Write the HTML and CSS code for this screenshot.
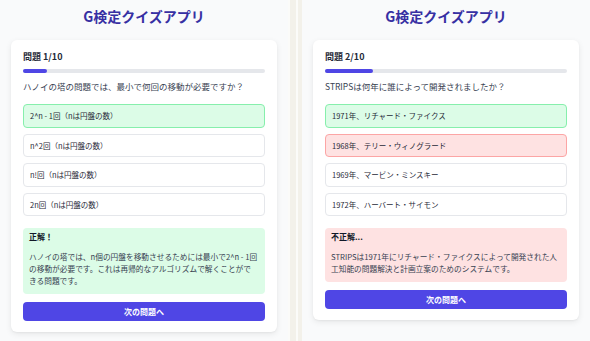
FILE: index.html
```html
<!DOCTYPE html>
<html lang="ja">

<head>
  <meta charset="UTF-8">
  <meta name="viewport" content="width=device-width, initial-scale=1.0">
  <title>G検定クイズアプリ</title>
  <link rel="stylesheet" href="styles.css">
</head>

<body>
  <div class="shots">
    <section class="app">
      <h1 class="app-title">G検定クイズアプリ</h1>
      <div class="card">
        <div class="q-head">問題 1/10</div>
        <div class="progress">
          <div class="progress-bar" style="width: 10%"></div>
        </div>
        <p class="q-text">ハノイの塔の問題では、最小で何回の移動が必要ですか？</p>
        <ul class="options">
          <li class="option option--correct">2^n - 1回（nは円盤の数）</li>
          <li class="option">n^2回（nは円盤の数）</li>
          <li class="option">n!回（nは円盤の数）</li>
          <li class="option">2n回（nは円盤の数）</li>
        </ul>
        <div class="feedback feedback--ok">
          <div class="feedback-title">正解！</div>
          <p class="feedback-text">ハノイの塔では、n個の円盤を移動させるためには最小で2^n - 1回の移動が必要です。これは再帰的なアルゴリズムで解くことがで<br>きる問題です。</p>
        </div>
        <button type="button" class="next-btn">次の問題へ</button>
      </div>
    </section>

    <div class="divider"></div>

    <section class="app">
      <h1 class="app-title">G検定クイズアプリ</h1>
      <div class="card">
        <div class="q-head">問題 2/10</div>
        <div class="progress">
          <div class="progress-bar" style="width: 20%"></div>
        </div>
        <p class="q-text">STRIPSは何年に誰によって開発されましたか？</p>
        <ul class="options">
          <li class="option option--correct">1971年、リチャード・ファイクス</li>
          <li class="option option--wrong">1968年、テリー・ウィノグラード</li>
          <li class="option">1969年、マービン・ミンスキー</li>
          <li class="option">1972年、ハーバート・サイモン</li>
        </ul>
        <div class="feedback feedback--ng">
          <div class="feedback-title">不正解...</div>
          <p class="feedback-text">STRIPSは1971年にリチャード・ファイクスによって開発された人工知能の問題解決と計画立案のためのシステムです。</p>
        </div>
        <button type="button" class="next-btn">次の問題へ</button>
      </div>
    </section>
  </div>
</body>

</html>
```

FILE: styles.css
```css
body {
  margin: 0;
  font-family: "Noto Sans CJK JP", sans-serif;
  color: #374151;
}
.shots {
  display: flex;
  height: 341px;
  overflow: hidden;
}
.app {
  flex: 1;
  background: #f9fafb;
  padding: 0 11px;
}
.divider {
  width: 14px;
  background: linear-gradient(to right, #fbfbf9 0 2px, #f3f1ea 2px 8px, #fbfbf9 8px 10px, #f3f1ea 10px);
}
.app-title {
  margin: 6px 0 14px;
  font-size: 14px;
  line-height: 20px;
  text-align: center;
  color: #3730a3;
}
.card {
  background: #fff;
  border-radius: 6px;
  padding: 11px 12px;
  box-shadow: 0 2px 6px rgba(0, 0, 0, 0.08), 0 1px 2px rgba(0, 0, 0, 0.04);
}
.q-head {
  font-size: 9px;
  line-height: 12px;
  font-weight: 700;
  color: #1f2937;
}
.progress {
  margin-top: 6px;
  height: 4px;
  border-radius: 2px;
  background: #e5e7eb;
}
.progress-bar {
  height: 100%;
  border-radius: 2px;
  background: #4f46e5;
}
.q-text {
  margin: 7px 0 12px;
  font-size: 8.5px;
  line-height: 12px;
}
.options {
  list-style: none;
  margin: 0;
  padding: 0;
  display: flex;
  flex-direction: column;
  gap: 6px;
}
.option {
  padding: 5px 6px;
  font-size: 7.5px;
  line-height: 11.5px;
  border: 1px solid #e5e7eb;
  border-radius: 4px;
  background: #fff;
  color: #1f2937;
}
.option--correct {
  background: #dcfce7;
  border-color: #86efac;
}
.option--wrong {
  background: #fee2e2;
  border-color: #fca5a5;
}
.feedback {
  margin-top: 12px;
  padding: 4px 5.3px 7px 6px;
  border-radius: 4px;
}
.feedback--ok {
  background: #dcfce7;
}
.feedback--ng {
  background: #fee2e2;
}
.feedback-title {
  font-size: 8px;
  line-height: 10px;
  font-weight: 700;
  color: #111827;
  margin-bottom: 9px;
}
.feedback-text {
  margin: 0;
  font-size: 7.7px;
  line-height: 12px;
}
.next-btn {
  display: block;
  width: 100%;
  margin-top: 8px;
  height: 19px;
  border: 0;
  border-radius: 4px;
  background: #4f46e5;
  color: #fff;
  font-family: inherit;
  font-size: 8px;
  font-weight: 700;
}
```
